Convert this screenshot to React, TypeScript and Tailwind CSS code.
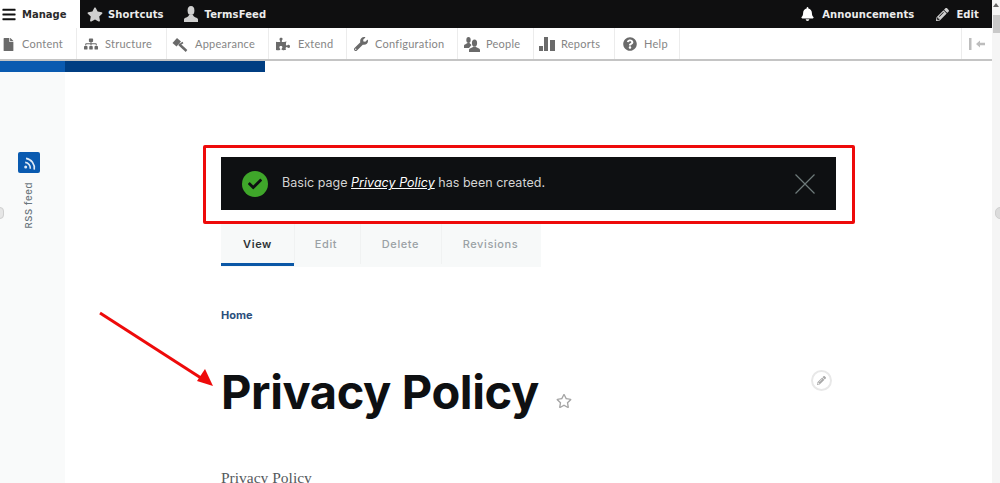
import React from "react";
import { FaBars, FaStar, FaFile, FaSitemap, FaPuzzlePiece, FaWrench, FaQuestionCircle, FaBell, FaPencilAlt, FaRegStar, FaCheck } from "react-icons/fa";

function TopItem({ icon, label, gap }: { icon: React.ReactNode; label: string; gap: string }) {
  return (
    <div className={`flex items-center text-[10px] font-bold tracking-[0.1px] text-[#ececec] font-['DejaVu_Sans',sans-serif] ${gap}`}>
      {icon}
      <span>{label}</span>
    </div>
  );
}

function AdminTab({ icon, label, cls }: { icon: React.ReactNode; label: string; cls: string }) {
  return (
    <div className={`flex h-full shrink-0 items-center border-r border-[#ececec] pt-[1px] text-[11px] tracking-[0.25px] text-[#858585] font-['Lato',sans-serif] ${cls}`}>
      <span className="flex w-[14px] justify-center text-[#6a6a6a]">{icon}</span>
      <span>{label}</span>
    </div>
  );
}

function ReportsIcon() {
  return (
    <svg width="16" height="14" viewBox="0 0 16 14" fill="#6a6a6a" className="shrink-0">
      <rect x="0" y="9" width="4" height="5" />
      <rect x="5" y="0" width="4" height="14" />
      <rect x="11" y="3" width="5" height="11" />
    </svg>
  );
}

function AppearanceIcon() {
  return (
    <svg width="16" height="15" viewBox="0 0 16 15" className="shrink-0" fill="none" stroke="#6a6a6a">
      <path d="M0.5 6 L5 1 L9 4.5 L4.5 9.5 Z" fill="#6a6a6a" stroke="none" />
      <path d="M7 7 L14.5 14" strokeWidth="2.4" />
      <path d="M8.5 7 L11 5.5" strokeWidth="1.6" />
    </svg>
  );
}

function PeopleIcon() {
  return (
    <svg width="16" height="15" viewBox="0 0 16 15" fill="#6a6a6a" className="shrink-0">
      <ellipse cx="4.5" cy="3" rx="2.2" ry="3" />
      <path d="M0 9 C0 7 3 7 3.5 6 L5.5 6 C6 7 7 7 7.5 8 L5 11 L0 11 Z" />
      <ellipse cx="10.5" cy="6" rx="2.6" ry="3.6" />
      <path d="M5 15 L5 13 C5 11 8.5 11 9.2 9.5 L11.8 9.5 C12.5 11 16 11 16 13 L16 15 Z" />
    </svg>
  );
}

function BustIcon() {
  return (
    <svg width="14" height="16" viewBox="0 0 14 16" fill="#cfcfcf" className="shrink-0">
      <ellipse cx="7" cy="4.5" rx="3.4" ry="4.5" />
      <path d="M0 16 L0 13.5 C0 11.5 4.5 11.5 5 9 L9 9 C9.5 11.5 14 11.5 14 13.5 L14 16 Z" />
    </svg>
  );
}

export default function App() {
  return (
    <div className="flex h-[483px] w-[1000px] overflow-hidden bg-white">
      <div className="relative flex h-full w-[992px] shrink-0 flex-col">
        {/* top toolbar */}
        <div className="flex h-[28px] shrink-0 items-center bg-[#0f0f10]">
          <div className="flex h-full w-[80px] items-center gap-[5px] bg-white pl-[1px] text-[10px] font-bold text-[#2b2b2b] font-['DejaVu_Sans',sans-serif]">
            <FaBars className="h-[15px] w-[16px] text-[#111]" />
            <span>Manage</span>
          </div>
          <div className="ml-[7px] flex items-center gap-[20px]">
            <TopItem gap="gap-[5px]" icon={<FaStar className="h-[15px] w-[16px] text-[#cfcfcf]" />} label="Shortcuts" />
            <TopItem gap="gap-[7px]" icon={<BustIcon />} label="TermsFeed" />
          </div>
          <div className="ml-auto flex items-center gap-[22px] pr-[13px]">
            <TopItem gap="gap-[8px]" icon={<FaBell className="h-[14px] w-[13px] text-white" />} label="Announcements" />
            <TopItem gap="gap-[7px]" icon={<FaPencilAlt className="h-[13px] w-[13px] text-[#cfcfcf]" />} label="Edit" />
          </div>
        </div>
        {/* admin tray */}
        <div className="flex h-[33px] shrink-0 items-stretch border-b-[2px] border-[#c4c4c4] bg-white">
          <AdminTab cls="w-[77px] gap-[7px] pl-[1px]" icon={<FaFile className="h-[13px] w-[11px]" />} label="Content" />
          <AdminTab cls="w-[90px] gap-[7px] pl-[7px]" icon={<FaSitemap className="h-[14px] w-[15px]" />} label="Structure" />
          <AdminTab cls="w-[102px] gap-[8px] pl-[6px]" icon={<AppearanceIcon />} label="Appearance" />
          <AdminTab cls="w-[78px] gap-[8px] pl-[7px]" icon={<FaPuzzlePiece className="h-[14px] w-[14px]" />} label="Extend" />
          <AdminTab cls="w-[111px] gap-[7px] pl-[7px]" icon={<FaWrench className="h-[14px] w-[14px]" />} label="Configuration" />
          <AdminTab cls="w-[76px] gap-[7px] pl-[7px]" icon={<PeopleIcon />} label="People" />
          <AdminTab cls="w-[81px] gap-[7px] pl-[6px]" icon={<ReportsIcon />} label="Reports" />
          <AdminTab cls="w-[65px] gap-[7px] pl-[8px]" icon={<FaQuestionCircle className="h-[14px] w-[14px]" />} label="Help" />
          <div className="ml-auto flex w-[31px] items-center justify-center border-l border-[#ececec]">
            <svg width="17" height="12" viewBox="0 0 17 12" fill="#bdbdbd">
              <rect x="0" y="0" width="2.5" height="12" />
              <path d="M7 6 L11 2.5 L11 4.8 L16 4.8 L16 7.2 L11 7.2 L11 9.5 Z" />
            </svg>
          </div>
        </div>
        {/* main */}
        <div className="relative flex min-h-0 flex-1">
          <aside className="flex w-[65px] shrink-0 flex-col items-center bg-[#f9fafa] pr-[7px] pt-[92px]">
            <div className="mt-[-1px] flex h-[21px] w-[22px] items-center justify-center rounded-[2px] bg-[#0a5ab0]">
              <svg width="15" height="15" viewBox="0 0 13 13" fill="none" stroke="#dfeaf6" strokeWidth="1.4">
                <circle cx="3.2" cy="10.4" r="1.3" fill="#dfeaf6" stroke="none" />
                <path d="M2 6.5 A 5 5 0 0 1 7.5 11" transform="rotate(12 3 10)" />
                <path d="M2 3 A 8.5 8.5 0 0 1 11 11" transform="rotate(12 3 10)" />
              </svg>
            </div>
            <span className="mt-[9px] rotate-180 text-[9.5px] font-medium tracking-[0.65px] text-[#6b767d] [writing-mode:vertical-rl] font-['Inter',sans-serif]">RSS feed</span>
          </aside>
          <div className="absolute left-0 top-0 flex h-[11px] w-[265px]">
            <span className="h-full w-[65px] bg-[#0a5ab0]" />
            <span className="h-full flex-1 bg-[#003e82]" />
          </div>
          <main className="min-w-0 flex-1 pl-[156px]">
            <div className="mt-[96px] flex h-[53px] w-[615px] items-center bg-[#0e1012] pl-[21px] pr-[21px]">
              <div className="flex h-[26px] w-[26px] items-center justify-center rounded-full bg-[#3fa62a]">
                <FaCheck className="h-[14px] w-[14px] text-[#0e1012]" />
              </div>
              <p className="ml-[14px] text-[12.5px] tracking-[0.03px] text-[#d4d4d4] font-['Inter',sans-serif]">
                Basic page <em className="text-white underline">Privacy Policy</em> has been created.
              </p>
              <svg className="ml-auto" width="20" height="20" viewBox="0 0 20 20" stroke="#6d7a7a" strokeWidth="1.2">
                <path d="M0.5 0.5 L19.5 19.5 M19.5 0.5 L0.5 19.5" />
              </svg>
            </div>
            <div className="mt-[14px] flex h-[43px] w-[320px] items-stretch bg-[#f7f9f9] pb-[1px] text-[11px] font-medium tracking-[0.6px] text-[#9aa1a5] font-['Inter',sans-serif]">
              <div className="flex w-[73px] items-center justify-center border-b-[3px] border-[#0a57a6] pt-[1px] font-semibold text-[#2f3437]">View</div>
              <div className="mb-[2px] flex w-[66px] items-center justify-center border-l border-[#f0f2f2] pr-[3px]">Edit</div>
              <div className="mb-[2px] flex w-[81px] items-center justify-center border-l border-[#f0f2f2] pr-[1px]">Delete</div>
              <div className="mb-[2px] flex flex-1 items-center justify-center border-l border-[#f0f2f2] pr-[2px]">Revisions</div>
            </div>
            <div className="mt-[41px] text-[11px] font-bold leading-[14px] text-[#2c4f7c] font-['Inter',sans-serif]">Home</div>
            <div className="relative mt-[40px] flex items-end">
              <h1 className="text-[47px] font-bold leading-[60px] tracking-[-0.4px] text-[#0e1012] font-['Inter',sans-serif]">Privacy Policy</h1>
              <FaRegStar className="mb-[13px] ml-[17px] h-[16px] w-[16px] text-[#a5a5a5]" />
              <div className="absolute left-[590px] top-[8px] flex h-[21px] w-[21px] items-center justify-center rounded-full border-2 border-[#e8e8e8] bg-white">
                <FaPencilAlt className="h-[9px] w-[9px] text-[#a8a8a8]" />
              </div>
            </div>
            <p className="mt-[46px] text-[15.5px] leading-[20px] text-[#55595c] font-['Liberation_Serif',serif]">Privacy Policy</p>
          </main>
          {/* red annotations */}
          <div className="pointer-events-none absolute left-[203px] top-[84px] h-[79px] w-[652px] rounded-[2px] border-[3px] border-[#ee0a0a]" />
          <svg className="pointer-events-none absolute left-[95px] top-[245px]" width="125" height="85" viewBox="0 0 125 85" fill="#ee0a0a">
            <path d="M5 7 L106 72" stroke="#ee0a0a" strokeWidth="3" />
            <path d="M118 80 L102 75 L110 63 Z" />
          </svg>
        </div>
        <span className="absolute left-[-4px] top-[207px] h-[12px] w-[8px] rounded-full border border-[#cfcfcf] bg-[#e6e6e6]" />
      </div>
      {/* scrollbar */}
      <div className="relative h-full flex-1 bg-[#f5f5f5]">
        <div className="mx-auto mt-[3px] h-0 w-0 border-x-[3px] border-b-[4px] border-x-transparent border-b-[#666]" />
        <div className="ml-[1px] mt-[8px] h-[18px] bg-[#c9c9c9]" />
        <span className="absolute left-[3px] top-[207px] h-[12px] w-[10px] rounded-full border border-[#cfcfcf] bg-[#dcdcdc]" />
      </div>
    </div>
  );
}
